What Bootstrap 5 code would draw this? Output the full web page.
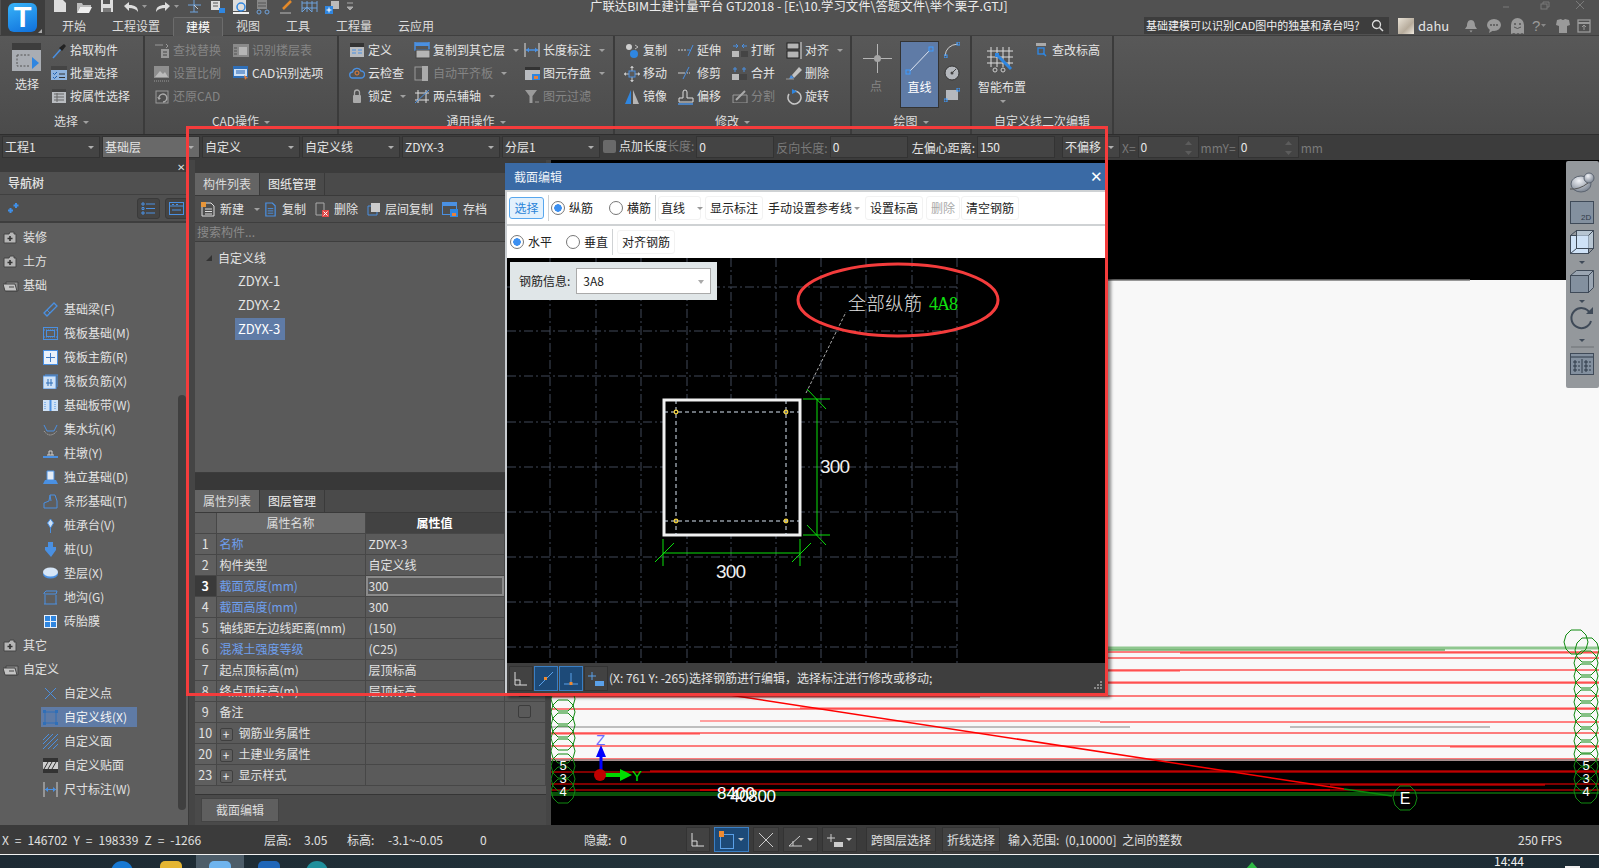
<!DOCTYPE html>
<html lang="zh-CN">
<head>
<meta charset="UTF-8">
<title>广联达BIM土建计量平台 GTJ2018</title>
<link href="https://cdn.jsdelivr.net/npm/bootstrap@5.3.0/dist/css/bootstrap.min.css" rel="stylesheet">
<style>
html,body{height:868px;overflow:hidden}
body{width:1599px;background:#3c3c3c;color:#e4e4e4;font:12px/1.2 "Noto Sans CJK SC","Liberation Sans",sans-serif;position:relative}
svg{display:block;flex:none}
.dim{color:#858585}
/* top band */
.top-band{height:35px;background:#515151;position:relative}
.logo-tile{width:44px;height:35px;margin-left:1px;background:#3d3d3d;padding:3px 7px;position:relative}
.logo-face{width:29px;height:29px;border-radius:6px;background:linear-gradient(160deg,#38b4f8,#0f6fdc);color:#fff;font:bold 29px/29px "Liberation Sans",sans-serif;text-align:center}
.logo-corner{position:absolute;right:3px;bottom:2px;border:solid transparent;border-width:0 0 4px 4px;border-bottom-color:#aaa}
.app-title{position:absolute;left:590px;top:0;font-size:12.4px;line-height:13px;color:#ececec;white-space:nowrap}
.quick-strip{position:absolute;left:50px;top:0}
.tab-strip{position:absolute;left:49px;top:17px;height:19px}
.tab-item{padding:0 13px;line-height:18px;color:#ddd;height:19px}
.tab-item.on{background:#565656;border:1px solid #6c6c6c;border-bottom:0;border-radius:2px 2px 0 0;color:#fff;line-height:18px;padding:0 12px}
.help-zone{position:absolute;left:1144px;top:17px;height:17px}
.help-search{width:245px;height:17px;background:#3d3d3d;padding-left:2px;line-height:17px;font-size:11px;color:#f0f0f0;position:relative}
.help-search svg{position:absolute;right:5px;top:2px}
.avatar-box{width:16px;height:16px;margin-left:9px;background:linear-gradient(135deg,#e8e2d6,#b7ac9c 60%,#efe9df)}
.user-name{margin-left:4px;font-size:13px;width:46px;line-height:17px}
.win-ctl{position:absolute;left:1500px;top:0}
/* ribbon */
.ribbon{height:99px;background:linear-gradient(#585858,#4b4b4b);border-top:1px solid #3f3f3f}
.rb-group{height:98px;border-right:2px solid #3b3b3b;position:relative;display:flex;flex-direction:column}
.rb-g1{width:145px;padding-left:12px}
.rb-g2{width:194px;padding-left:9px}
.rb-g3{width:276px;padding-left:10px}
.rb-g4{width:237px;padding-left:9px}
.rb-g5{width:120px;padding-left:11px}
.rb-g6{width:142px;padding-left:6px}
.rb-body{height:74px;padding-top:3px;display:flex}
.rb-grid{display:grid;grid-auto-rows:23px;align-items:center}
.grid-g1{grid-template-columns:92px}
.grid-g2{grid-template-columns:79px 100px}
.grid-g3{grid-template-columns:65px 110px 90px}
.grid-g4{grid-template-columns:54px 54px 54px 60px}
.rb-item{display:flex;align-items:center;gap:3px;white-space:nowrap}
.rb-item.off{color:#858585}
.rb-big{width:40px}
.rb-big-label{margin:6px 0 0 3px}
.caret{width:0;height:0;border:solid transparent;border-width:3px 3px 0;border-top-color:#a0a0a0;display:inline-block;margin-left:5px;vertical-align:middle}
.rb-label{position:absolute;left:0;right:0;top:77px;text-align:center;color:#dcdcdc;line-height:16px}
.draw-point{width:37px;color:#858585}
.draw-point svg{margin-top:5px}
.draw-point div{margin:6px 0 0 7px}
.draw-line{width:39px;height:67px;margin-top:2px;background:#5f7ba6;border:1px solid #333;color:#fff;text-align:center}
.draw-line svg{margin:3px 0 4px 3px}
.draw-side{margin-left:5px;display:flex;flex-direction:column;gap:7px;padding-top:3px}
.smart-col{width:57px}
.smart-col svg{margin:5px 0 6px 9px}
.smart-col .caret{margin:6px 0 0 22px;display:block}
/* option bar */
.opt-bar{height:26px;background:#3c3c3c;border-top:1px solid #2e2e2e;padding:1px 0 0 2px;gap:2px}
.combo{height:22px;width:98px;background:#444;border:1px solid #333;padding-left:2px;line-height:20px;position:relative;white-space:nowrap}
.combo::after{content:"";position:absolute;right:5px;top:9px;border:solid transparent;border-width:3px 3px 0;border-top-color:#b0b0b0}
.combo.hot{background:#696969}
.combo.wide-off{width:58px;margin-left:5px}
.opt-check{width:13px;height:13px;background:#6a6a6a;border-radius:2px;margin:0 3px 0 1px}
.opt-input{height:22px;width:78px;background:#444;border:1px solid #333;padding-left:2px;line-height:20px;color:#e9e9e9;position:relative}
.opt-input.short{width:61px}
.spin{position:absolute;right:6px;top:4px}
.tx-gap{margin-left:2px}
.dim-tx{color:#7a7a7a;white-space:nowrap}
/* main */
.main-area{height:665px;position:relative}
.nav-pane{width:189px;background:#5e5e5e;border-right:1px solid #3a3a3a;position:relative}
.strip-top{height:12px;background:#3c3c3c;position:relative}
.strip-close{position:absolute;left:177px;top:2px;color:#ddd;font-size:10px;line-height:10px}
.nav-head{height:23px;padding-left:8px;line-height:22px;background:#505050;border-bottom:1px solid #404040;font-weight:500}
.nav-tools{height:28px;background:#505050;border-bottom:2px solid #3e3e3e;position:relative;padding-left:7px;margin-bottom:2px}
.nav-tool-btn{position:absolute;top:3px;width:23px;height:21px;border:1px solid #3a3a3a;border-radius:3px;background:#444;padding:3px}
.tb-a{left:137px}
.tb-b{left:165px}
.tree-row{height:24px;display:flex;align-items:center;white-space:nowrap;color:#e2e2e2}
.tree-root{padding-left:3px;gap:6px}
.tree-root.open{gap:4px}
.tree-kid{padding-left:43px;gap:6px}
.tree-kid.on{background:linear-gradient(#5f7ba6,#5f7ba6) 41px 2px/96px 20px no-repeat;color:#f4f4f4}
.nav-scroll{position:absolute;left:178px;top:235px;width:8px;height:415px;background:#3f3f3f;border-radius:4px}
.mid-pane{width:362px;background:#454545;padding-left:6px}
.mid-inner{width:351px}
.mid-top{height:13px;background:#3c3c3c}
.pane-tabs{height:23px;background:#4a4a4a;border-bottom:1px solid #3a3a3a}
.pane-tab{width:65px;height:22px;line-height:22px;text-align:center;border-right:1px solid #3a3a3a;color:#eee}
.pane-tab.on{background:#646464;color:#ddd}
.list-pane{height:277px;background:#5a5a5a;border-bottom:1px solid #3c3c3c}
.list-tools{height:27px;background:#4f4f4f;border-bottom:1px solid #3e3e3e;padding-left:6px}
.lt-item{display:flex;align-items:center;gap:5px;margin-right:9px}
.lt-item.drop{margin-right:4px}
.list-search{height:19px;padding-left:2px;line-height:18px;color:#8a8a8a;background:#505050;border-bottom:1px solid #3e3e3e}
.list-tree{padding-top:3px}
.lt-row{height:25px;line-height:24px}
.lt-root{padding-left:11px;display:flex;align-items:center;gap:6px}
.lt-kid{margin:0 0 2px 40px;padding:0 3px;width:50px;white-space:nowrap;font-size:13px;height:22px;line-height:22px}
.lt-kid.on{background:#5f7ba6;color:#fff}
.gutter{height:17px;background:#383838}
.prop-table{width:351px;table-layout:fixed;margin:0;--bs-table-bg:#5a5a5a;--bs-table-color:#e2e2e2;--bs-table-border-color:#474747;border-color:#474747;font-size:12px}
.prop-table td,.prop-table th{padding:0 3px;height:21px;line-height:19px;border-width:0 1px 1px 0;white-space:nowrap;overflow:hidden;vertical-align:middle;font-weight:400}
.prop-table th{height:20px}
.prop-table .cn{width:21px;text-align:center;padding:0;background:#5f5f5f;font-size:12.5px}
.prop-table .cname{width:149px}
.prop-table .cval{width:139px}
.prop-table th.h-name{background:#696969;text-align:center;color:#dedede}
.prop-table th.h-val{background:#424242;text-align:center;color:#fff;font-weight:700}
.prop-table th.cn,.prop-table th.h-x{background:#5f5f5f}
.prop-table .lnk{color:#6e9fee}
.prop-table tr.sel .cn{background:#3a3a3a;color:#fff;font-weight:700}
.prop-table tr.sel .cval{box-shadow:inset 0 0 0 2px #8a8a8a}
.plus-box{display:inline-block;width:13px;height:13px;border:1px solid #3f3f3f;border-radius:2px;line-height:10px;text-align:center;margin-right:6px;vertical-align:-1px;background:#5f5f5f;color:#eee;font-size:12px}
.tick-box{display:block;width:13px;height:13px;border:1px solid #3c3c3c;border-radius:2px;margin:0 auto}
.prop-foot{height:9px;background:#5a5a5a;border-bottom:1px solid #353535}
.act-bar{height:31px;background:#4a4a4a;padding:3px 0 0 6px}
.sect-btn{width:78px;height:24px;padding:0;background:#5f5f5f;border:1px solid #444;border-radius:0;color:#ddd;font-size:12px;line-height:22px}
.cad-pane{flex:1;background:#000;position:relative}
.view-tools{position:absolute;right:0;top:1px}
/* dialog */
.sect-dialog{position:absolute;left:505px;top:3px;width:603px;height:533px;background:#fff;box-shadow:3px 2px 3px rgba(0,0,0,.45);border-left:2px solid #c9cdd1;color:#1e1e1e}
.dlg-title{height:27px;margin-left:-2px;background:#3a6aa5;color:#eef3f8;padding-left:9px;line-height:27px}
.dlg-x{position:absolute;right:5px;top:4px;color:#fff;font-size:15px;line-height:18px}
.dlg-row{height:32px;border-top:2px solid #cfd2d4;padding-left:2px;box-sizing:content-box}
.pick-btn{width:35px;height:22px;background:#e3f1fd;border:1px solid #58a7ee;border-radius:3px;color:#2a84d8;padding:0;line-height:20px;font-size:12px}
.vsep{width:1px;height:26px;background:#cfd2d4}
.vs-first{margin:0 2px 0 4px}
.radio-item{display:flex;align-items:center;gap:4px;color:#222}
.radio-item .form-check-input{width:14px;height:14px;margin:0;background-color:#fff;border:1px solid #777;flex:none}
.radio-item .form-check-input:checked{background-color:#fff;border-color:#777;background-image:radial-gradient(circle,#3b8ff0 0 3.5px,transparent 4px)}
.rad-start{margin-left:1px}
.rad-next{margin-left:14px}
.flat-btn{height:24px;padding:0 4px;border:1px solid #f2f2f2;border-radius:3px;line-height:22px;white-space:nowrap;color:#222;position:relative}
.flat-btn.off{color:#aaa}
.flat-drop{width:43px;padding-left:2px;margin-left:2px}
.flat-drop::after,.flat-ref::after{content:"";position:absolute;top:10px;border:solid transparent;border-width:3px 3px 0;border-top-color:#999}
.flat-drop::after{right:-3px}
.flat-ref{width:102px;border-color:transparent}
.flat-ref::after{right:4px}
.gap-3p{margin-left:3px}
.gap-1p{margin-left:1px}
.rebar-info{position:absolute;left:3px;top:4px;width:207px;height:38px;background:#e0e6e8;display:flex;align-items:center;padding-left:9px;color:#222}
.rebar-sel{width:135px;height:26px;margin-left:6px;background:#fff;border:1px solid #aaa;padding-left:6px;line-height:24px;position:relative}
.rebar-sel::after{content:"";position:absolute;right:6px;top:11px;border:solid transparent;border-width:4px 3px 0;border-top-color:#aaa}
.dlg-canvas{height:405px;background:#000;position:relative}
.dlg-status{height:31px;background:#3e3e3e;color:#e2e2e2;padding-left:2px;position:relative;gap:1px;white-space:nowrap}
.st-btn{width:24px;height:25px;border:1px solid #333;background:#424242;display:flex;align-items:center;justify-content:center}
.st-btn.on{background:#1d4a78;border-color:#3a7fc4}
.grip{position:absolute;right:6px;bottom:5px}
.red-mark{position:absolute;left:186px;top:126px;width:922px;height:570px;border:3px solid #f43c3c;pointer-events:none}
/* status */
.status-bar{height:29px;background:#3b3b3b;white-space:nowrap;position:relative;color:#e0e0e0}
.sb-tx{position:absolute;top:0;line-height:29px}
.sx-xyz{left:2px;word-spacing:3.3px}
.sx-a{left:264px}.sx-b{left:304px}.sx-c{left:347px}.sx-d{left:388px}.sx-e{left:480px}.sx-f{left:584px}.sx-g{left:620px}.sx-h{left:1518px}
.sb-tools{position:absolute;left:686px;top:2px;gap:4px}
.sb-btn{height:25px;border:1px solid #333;background:#424242;display:flex;align-items:center;justify-content:center;gap:3px;padding:0 4px;line-height:23px;color:#e0e0e0}
.sb-btn.on{background:#1d4a78;border-color:#3a7fc4}
.sb-first{margin-left:5px}
.sb-second{margin-left:2px}
.sb-range{word-spacing:3px;line-height:25px}
.sb-caret{border:solid transparent;border-width:3px 3px 0;border-top-color:#ccc;width:0;height:0}
.task-bar{height:14px;border-top:1px solid #f2f2f2;background:linear-gradient(90deg,#1d2a33,#24353b 60%,#1c2a33);position:relative;overflow:hidden}
.task-on{position:absolute;left:196px;top:0;width:48px;height:13px;background:#4d5d69}
.task-dot{position:absolute;top:6px;width:22px;height:22px;border-radius:5px}
.dot-a{left:111px;background:#1778d2;border-radius:50%}
.dot-b{left:160px;background:#e4b533}
.dot-c{left:209px;background:#6fb4ee}
.dot-d{left:258px;background:#1f66b8}
.dot-e{left:306px;background:#1f8f9c;border-radius:50%}
.task-clock{position:absolute;left:1494px;top:-1px;line-height:14px;color:#eee;font-size:12px}
.task-mark{position:absolute;left:1246px;top:7px;border:solid transparent;border-width:0 6px 7px;border-bottom-color:#2fb844}
.task-edge{position:absolute;left:1565px;top:11px;width:15px;height:2px;background:#eee}
</style>
</head>
<body>
<svg width="0" height="0" class="position-absolute">
  <symbol id="fold-plus" viewBox="0 0 14 13"><path d="M1 3h5l1-2h4v2h2v9H1z" fill="#b5b5b5" stroke="#444"/><path d="M7 5v5M4.500 7.500h5" stroke="#333" stroke-width="1.600"/></symbol>
  <symbol id="fold-open" viewBox="0 0 16 13"><path d="M3 3h12v9H3z" fill="#8f8f8f" stroke="#444"/><path d="M0 5h12l2 7H2z" fill="#c4c4c4" stroke="#444"/><path d="M6 8h5" stroke="#444"/></symbol>
  <symbol id="tpl-doc" viewBox="0 0 14 16"><path d="M2 1h7l3 3v11H2z" fill="none" stroke="#4a90e2" stroke-width="1.300"/><path d="M4 7h6M4 9.500h6M4 12h6" stroke="#4a90e2"/></symbol>
  <polygon id="hex" points="-5,-12 5,-12 10,-7 12,0 10,7 5,12 -5,12 -10,7 -12,0 -10,-7"/>
  <radialGradient id="ball" cx=".4" cy=".3" r=".8"><stop offset="0" stop-color="#f2f4f8"/><stop offset="1" stop-color="#6c7684"/></radialGradient>
</svg>

<header class="top-band">
  <div class="logo-tile"><div class="logo-face">T</div><span class="logo-corner"></span></div>
  <svg class="quick-strip" width="310" height="15" viewBox="50 0 310 15">
    <path d="M54 0h9l3 3v9H54z" fill="#ddd"/>
    <path d="M77 3h5l1 2h8v2H80l-3 6z" fill="#bbb"/><path d="M80 7h12l-3 6H77z" fill="#eee"/>
    <path d="M101 0h12v12h-12z" fill="#ddd"/><path d="M103 0h7v4h-7z" fill="#555"/><path d="M103 8h8v4h-8z" fill="#777"/>
    <path d="M124 6l5-4v3c6 0 9 2 9 7-2-3-5-4-9-4v3z" fill="#ddd"/><path d="M142 5h5l-2.500 3z" fill="#999"/>
    <path d="M170 6l-5-4v3c-6 0-9 2-9 7 2-3 5-4 9-4v3z" fill="#ddd"/><path d="M174 5h5l-2.500 3z" fill="#999"/>
    <path d="M188 5h13M194 0v12M190 12h8" stroke="#6fa3dd" fill="none"/><path d="M194 5l4 4" stroke="#ccc"/>
    <rect x="211" y="1" width="9" height="9" fill="#ddd"/><rect x="219" y="8" width="6" height="5" fill="#2f86e0"/><path d="M213 3h5M213 6h5" stroke="#555"/>
    <rect x="233" y="0" width="13" height="11" fill="#ddd"/><circle cx="241" cy="7" r="4" fill="none" stroke="#2f86e0" stroke-width="1.500"/><path d="M233 13h16" stroke="#eee" stroke-width="2"/>
    <rect x="257" y="0" width="10" height="9" fill="#888"/><path d="M258 3h8M258 6h8" stroke="#555"/><circle cx="259" cy="12" r="2" fill="none" stroke="#6fa3dd"/><circle cx="267" cy="12" r="2" fill="none" stroke="#6fa3dd"/>
    <path d="M283 9L291 1" stroke="#e48a2a" stroke-width="2.500"/><path d="M280 13h11" stroke="#bbb"/>
    <path d="M302 12V1M307 12V1M312 12V1M317 12V1M302 3h15M302 8h15M302 12l5-5 5 5" stroke="#6fa3dd" fill="none"/>
    <path d="M331 1h8v8h-8z" fill="#bbb"/><rect x="325" y="6" width="8" height="8" fill="#2f86e0"/><path d="M329 7.500v5M326.500 10h5" stroke="#fff"/>
    <path d="M347 3h6M347 7h6l-3 3z" stroke="#aaa" fill="#aaa"/>
  </svg>
  <div class="app-title">广联达BIM土建计量平台 GTJ2018 - [E:\10.学习文件\答题文件\举个栗子.GTJ]</div>
  <nav class="tab-strip d-flex">
    <div class="tab-item">开始</div>
    <div class="tab-item">工程设置</div>
    <div class="tab-item on">建模</div>
    <div class="tab-item">视图</div>
    <div class="tab-item">工具</div>
    <div class="tab-item">工程量</div>
    <div class="tab-item">云应用</div>
  </nav>
  <div class="help-zone d-flex align-items-center">
    <div class="help-search">基础建模可以识别CAD图中的独基和承台吗?<svg width="13" height="13" viewBox="0 0 13 13"><circle cx="5.500" cy="5.500" r="4" fill="none" stroke="#ddd" stroke-width="1.300"/><path d="M8.500 8.500l3.500 3.500" stroke="#ddd" stroke-width="1.500"/></svg></div>
    <div class="avatar-box"></div>
    <div class="user-name">dahu</div>
    <svg width="140" height="17" viewBox="0 0 140 17">
      <path d="M7 3c-3 0-4 3-4 6l-2 3h12l-2-3c0-3-1-6-4-6zM5.500 13.500h3l-1.500 2z" fill="#9a9a9a"/>
      <ellipse cx="30" cy="8" rx="7" ry="6" fill="#9a9a9a"/><path d="M26 12l-1 4 5-3z" fill="#9a9a9a"/><circle cx="27" cy="8" r="1" fill="#555"/><circle cx="30" cy="8" r="1" fill="#555"/><circle cx="33" cy="8" r="1" fill="#555"/>
      <path d="M47 8a6.500 7 0 0 1 13 0v9l-2-1-2 1-2-1-2 1-2-1-3 1z" fill="#9a9a9a"/><circle cx="51" cy="7" r="1" fill="#555"/><circle cx="56" cy="7" r="1" fill="#555"/><path d="M50 10q3.500 3 7 0" stroke="#555" fill="none"/>
      <text x="68" y="14" font-size="15" fill="#9a9a9a" font-family="Liberation Sans">?</text><path d="M77 7h5l-2.500 3z" fill="#888"/>
      <path d="M93 3l4-1q2 2 4 0l4 1 1 5-3 1v7h-8V9l-3-1z" fill="#9a9a9a"/>
      <rect x="114" y="3" width="12" height="12" fill="none" stroke="#9a9a9a" stroke-width="1.300"/><path d="M114 6h12" stroke="#9a9a9a" stroke-width="2"/><path d="M120 13V8M118 10l2-2 2 2" stroke="#9a9a9a" fill="none"/>
    </svg>
  </div>
  <svg class="win-ctl" width="90" height="12" viewBox="1500 0 90 12"><path d="M1503 7h6" stroke="#7a7a7a"/><rect x="1541" y="4" width="6" height="5" fill="none" stroke="#7a7a7a"/><path d="M1543 4V2h6v5h-2" fill="none" stroke="#7a7a7a"/><path d="M1576 1l8 8M1584 1l-8 8" stroke="#7a7a7a"/></svg>
</header>

<section class="ribbon d-flex">
  <div class="rb-group rb-g1">
    <div class="rb-body">
      <div class="rb-big">
        <svg width="29" height="28" viewBox="0 0 29 28" class="mt-1"><rect width="29" height="28" fill="#a9adb3"/><rect width="29" height="7" fill="#3d3d3d"/><path d="M5 12h13M5 12v11h13" stroke="#555" stroke-dasharray="2 1.500" fill="none"/><path d="M20 14l7 6-7 6z" fill="#2f86e0"/></svg>
        <div class="rb-big-label">选择</div>
      </div>
      <div class="rb-grid grid-g1">
        <div class="rb-item"><svg width="16" height="16" viewBox="0 0 16 16"><path d="M2 15l8-9" stroke="#4a90e2" stroke-width="1.500"/><path d="M8 5l3 3 4-5-2-2z" fill="#222"/></svg>拾取构件</div>
        <div class="rb-item"><svg width="16" height="14" viewBox="0 0 16 14"><rect width="16" height="14" fill="#444"/><rect y="4" width="16" height="10" fill="#8fb3de"/><path d="M2 7l1.500 1.500L6 6M2 11l1.500 1.500L6 10" stroke="#1f5fb0" fill="none"/><path d="M8 8h6M8 11.500h6" stroke="#333"/></svg>批量选择</div>
        <div class="rb-item"><svg width="16" height="14" viewBox="0 0 16 14"><rect width="14" height="14" x="1" fill="#b9bcc0"/><rect width="14" height="3" x="1" fill="#444"/><path d="M3 5h10M3 8h10M3 11h10M6 4v9" stroke="#666"/></svg>按属性选择</div>
      </div>
    </div>
    <div class="rb-label">选择<span class="caret"></span></div>
  </div>

  <div class="rb-group rb-g2">
    <div class="rb-body rb-grid grid-g2 d-grid">
      <div class="rb-item off"><svg width="16" height="16" viewBox="0 0 16 16"><path d="M1 2h8M12 1l2 2-2 2" stroke="#999" fill="none"/><rect x="7" y="6" width="8" height="9" fill="#999"/><path d="M9 9h4M9 12h4" stroke="#444"/></svg>查找替换</div>
      <div class="rb-item off"><svg width="16" height="13" viewBox="0 0 16 13"><rect width="16" height="13" fill="#8a8a8a"/><rect x="6" y="3" width="8" height="8" fill="#b5b5b5"/><path d="M1 4h3M1 7h3M1 10h3" stroke="#555"/></svg>识别楼层表</div>
      <div class="rb-item off"><svg width="16" height="16" viewBox="0 0 16 16"><rect width="15" height="12" fill="#8e8e8e"/><path d="M1 11l5-6 3 3 2-2 3 5z" fill="#bbb"/><path d="M0 15h15" stroke="#999" stroke-dasharray="1 1"/></svg>设置比例</div>
      <div class="rb-item"><svg width="16" height="14" viewBox="0 0 16 14"><rect width="15" height="12" fill="#2f6fb8"/><rect x="1" y="3" width="13" height="7" fill="#cfe2f7"/><path d="M3 5h9M3 7h9" stroke="#1f5fb0"/><path d="M11 9l4 3-2 .5-1 1.500z" fill="#e8803a"/></svg>CAD识别选项</div>
      <div class="rb-item off"><svg width="16" height="16" viewBox="0 0 16 16"><rect x="2" y="2" width="12" height="12" fill="none" stroke="#999"/><path d="M5 10a4 4 0 1 1 4 3" fill="none" stroke="#aaa" stroke-width="1.400"/><path d="M3 8l2 3 2-2z" fill="#aaa"/></svg>还原CAD</div>
    </div>
    <div class="rb-label">CAD操作<span class="caret"></span></div>
  </div>

  <div class="rb-group rb-g3">
    <div class="rb-body rb-grid grid-g3 d-grid">
      <div class="rb-item"><svg width="16" height="14" viewBox="0 0 16 14"><rect x="1" width="14" height="14" fill="#b9bcc0"/><rect x="1" width="14" height="4" fill="#333"/><path d="M3 7h4M3 10h4M9 7h4M9 10h4" stroke="#4a90e2"/></svg>定义</div>
      <div class="rb-item"><svg width="16" height="17" viewBox="0 0 16 17"><rect x="1" y="0" width="14" height="8" fill="none" stroke="#4a90e2" stroke-width="1.500"/><rect x="1" y="1" width="14" height="3" fill="#4a90e2"/><rect x="2" y="8" width="14" height="8" fill="#b5b5b5" stroke="#444"/></svg>复制到其它层<span class="caret"></span></div>
      <div class="rb-item"><svg width="16" height="14" viewBox="0 0 16 14"><path d="M1 0v14M15 0v14" stroke="#ddd"/><path d="M2 7h12" stroke="#4a90e2" stroke-width="1.500"/><path d="M2 7l3-2.500v5zM14 7l-3-2.500v5z" fill="#4a90e2"/></svg>长度标注<span class="caret"></span></div>
      <div class="rb-item"><svg width="16" height="14" viewBox="0 0 16 14"><path d="M4 12a3 3 0 0 1-.5-6A4.500 4.500 0 0 1 12 5a3.500 3.500 0 0 1 0 7z" fill="none" stroke="#4a90e2" stroke-width="1.300"/><circle cx="8" cy="7" r="2" fill="none" stroke="#e8803a"/></svg>云检查</div>
      <div class="rb-item off"><svg width="16" height="15" viewBox="0 0 16 15"><rect x="1" y="1" width="8" height="13" fill="none" stroke="#999"/><rect x="8" y="0" width="6" height="15" fill="#aaa"/></svg>自动平齐板<span class="caret"></span></div>
      <div class="rb-item"><svg width="16" height="15" viewBox="0 0 16 15"><rect x="1" y="1" width="15" height="13" fill="#b9bcc0"/><rect x="1" y="1" width="15" height="3" fill="#333"/><rect x="8" y="8" width="8" height="6" fill="#2f86e0"/><rect x="10" y="10" width="4" height="3" fill="#e8803a"/></svg>图元存盘<span class="caret"></span></div>
      <div class="rb-item"><svg width="16" height="14" viewBox="0 0 16 14"><rect x="4" y="6" width="8" height="8" rx="1" fill="#aaa"/><path d="M5.500 6V3.500a2.500 2.500 0 0 1 5 0V6" fill="none" stroke="#aaa" stroke-width="1.300"/></svg>锁定<span class="caret"></span></div>
      <div class="rb-item"><svg width="16" height="15" viewBox="0 0 16 15"><path d="M4 1v13M12 1v13M1 4h14M1 11h14" stroke="#ddd"/><path d="M1 14L15 1" stroke="#4a90e2"/></svg>两点辅轴<span class="caret"></span></div>
      <div class="rb-item off"><svg width="16" height="15" viewBox="0 0 16 15"><path d="M1 1h12L8.500 7v7h-3V7z" fill="#9a9a9a"/><path d="M11 13h4" stroke="#999"/></svg>图元过滤</div>
    </div>
    <div class="rb-label">通用操作<span class="caret"></span></div>
  </div>

  <div class="rb-group rb-g4">
    <div class="rb-body rb-grid grid-g4 d-grid">
      <div class="rb-item"><svg width="16" height="16" viewBox="0 0 16 16"><circle cx="5" cy="4" r="3" fill="#cfcfcf"/><circle cx="10" cy="11" r="4" fill="#2f86e0"/><path d="M11 2l3 2-3 2" stroke="#bbb" fill="none"/></svg>复制</div>
      <div class="rb-item"><svg width="16" height="14" viewBox="0 0 16 14"><path d="M0 7h9" stroke="#ccc" stroke-dasharray="2 1"/><path d="M10 13L15 2" stroke="#4a90e2"/><path d="M9 7h3" stroke="#4a90e2"/></svg>延伸</div>
      <div class="rb-item"><svg width="16" height="16" viewBox="0 0 16 16"><rect y="8" width="7" height="6" fill="#bbb"/><rect x="9" y="8" width="7" height="6" fill="#444"/><path d="M1 3h5M4 1l2 2-2 2M15 3h-5M12 1l-2 2 2 2" stroke="#4a90e2" fill="none"/></svg>打断</div>
      <div class="rb-item"><svg width="16" height="17" viewBox="0 0 16 17"><rect x="1" y="1" width="12" height="6" fill="#b5b5b5" stroke="#222"/><rect x="1" y="9" width="12" height="7" fill="#b5b5b5" stroke="#222"/><path d="M15 0v17" stroke="#ddd"/></svg>对齐<span class="caret"></span></div>
      <div class="rb-item"><svg width="16" height="16" viewBox="0 0 16 16"><path d="M8 0v16M0 8h16" stroke="#ccc"/><rect x="5" y="5" width="6" height="6" fill="#5a5a5a" stroke="#4a90e2"/><path d="M8 0l-2 2h4zM8 16l-2-2h4zM0 8l2-2v4zM16 8l-2-2v4z" fill="#ccc"/></svg>移动</div>
      <div class="rb-item"><svg width="16" height="14" viewBox="0 0 16 14"><path d="M0 7h7" stroke="#ccc"/><path d="M9 7h3" stroke="#ccc" stroke-dasharray="1 1"/><path d="M5 13L11 1" stroke="#4a90e2"/></svg>修剪</div>
      <div class="rb-item"><svg width="16" height="16" viewBox="0 0 16 16"><rect y="8" width="15" height="6" fill="#444"/><rect y="8" width="7" height="6" fill="#bbb"/><path d="M3 1v5M1 3h4M12 1v5M10 3h4" stroke="#4a90e2"/></svg>合并</div>
      <div class="rb-item"><svg width="16" height="14" viewBox="0 0 16 14"><path d="M6 9l7-8 3 3-8 8z" fill="#c2c2c2"/><path d="M5 9l3 3-2 1H3z" fill="#4a90e2"/><path d="M0 13h8" stroke="#999"/></svg>删除</div>
      <div class="rb-item"><svg width="16" height="16" viewBox="0 0 16 16"><path d="M7 1v14H1z" fill="#2f86e0"/><path d="M9 1v14h6z" fill="#b5b5b5"/></svg>镜像</div>
      <div class="rb-item"><svg width="16" height="16" viewBox="0 0 16 16"><path d="M1 13V9h4V3a2 2 0 0 1 4 0v6h6v4z" fill="none" stroke="#ddd"/><path d="M0 15h15" stroke="#4a90e2" stroke-width="1.500"/></svg>偏移</div>
      <div class="rb-item off"><svg width="16" height="14" viewBox="0 0 16 14"><path d="M1 6h14v8H1z" fill="none" stroke="#999"/><path d="M4 11l9-9" stroke="#aaa" stroke-width="2"/></svg>分割</div>
      <div class="rb-item"><svg width="16" height="16" viewBox="0 0 16 16"><path d="M9 2a6.500 6.500 0 1 1-6 3" fill="none" stroke="#c7c7c7" stroke-width="1.500"/><path d="M6 0l5 2.500L6 5z" fill="#2f86e0"/></svg>旋转</div>
    </div>
    <div class="rb-label">修改<span class="caret"></span></div>
  </div>

  <div class="rb-group rb-g5">
    <div class="rb-body">
      <div class="draw-point">
        <svg width="29" height="29" viewBox="0 0 29 29"><path d="M14.500 0v29M0 14.500h29" stroke="#b5b5b5"/><circle cx="14.500" cy="14.500" r="3.500" fill="#a5a5a5"/></svg>
        <div>点</div>
      </div>
      <div class="draw-line">
        <svg width="30" height="31" viewBox="0 0 30 31"><path d="M5 27L27 4" stroke="#dfe7f2"/><rect x="2" y="25" width="4" height="4" fill="#5f7ba6" stroke="#3f9bff"/><rect x="25" y="2" width="4" height="4" fill="#5f7ba6" stroke="#3f9bff"/></svg>
        直线
      </div>
      <div class="draw-side">
        <svg width="16" height="16" viewBox="0 0 16 16"><path d="M1 14Q2 3 14 2" fill="none" stroke="#ccc"/><rect x="0" y="13" width="3" height="3" fill="none" stroke="#3f9bff"/><rect x="13" y="0" width="3" height="3" fill="none" stroke="#3f9bff"/></svg>
        <svg width="16" height="16" viewBox="0 0 16 16"><circle cx="8" cy="8" r="7" fill="#b5b8bd" stroke="#333"/><circle cx="8" cy="8" r="1.500" fill="#444"/><path d="M8 8l4-4" stroke="#444"/></svg>
        <svg width="16" height="14" viewBox="0 0 16 14"><rect x="2" y="2" width="12" height="10" fill="#b5b8bd"/><rect x="0" y="11" width="3" height="3" fill="none" stroke="#3f9bff"/><rect x="13" y="0" width="3" height="3" fill="none" stroke="#3f9bff"/></svg>
      </div>
    </div>
    <div class="rb-label">绘图<span class="caret"></span></div>
  </div>

  <div class="rb-group rb-g6">
    <div class="rb-body">
      <div class="smart-col">
        <svg width="30" height="30" viewBox="0 0 30 30"><path d="M4 3v20M10 3v20M16 3v20M22 3v20M0 7h26M0 13h26M0 19h26" stroke="#ddd"/><path d="M10 11l14 14" stroke="#2f86e0" stroke-width="3"/><rect x="8" y="9" width="4" height="4" fill="#2f86e0"/><circle cx="8" cy="26" r="2" fill="none" stroke="#ccc"/><circle cx="16" cy="26" r="2" fill="none" stroke="#ccc"/></svg>
        <div>智能布置</div>
        <span class="caret"></span>
      </div>
      <div class="rb-item align-self-start mt-1"><svg width="14" height="14" viewBox="0 0 14 14"><path d="M1 0h10v3H1z" fill="#aaa"/><rect x="3" y="5" width="6" height="6" fill="none" stroke="#2f86e0" stroke-width="1.400"/><path d="M8 10l3 3" stroke="#2f86e0" stroke-width="1.400"/></svg>查改标高</div>
    </div>
    <div class="rb-label">自定义线二次编辑</div>
  </div>
  <div class="flex-fill"></div>
</section>

<section class="opt-bar d-flex align-items-start">
  <div class="combo">工程1</div>
  <div class="combo hot">基础层</div>
  <div class="combo">自定义</div>
  <div class="combo">自定义线</div>
  <div class="combo">ZDYX-3</div>
  <div class="combo">分层1</div>
  <div class="d-flex align-items-center align-self-stretch mb-1">
    <span class="opt-check"></span><span>点加长度</span><span class="dim-tx">长度:</span>
  </div>
  <div class="opt-input">0</div>
  <div class="dim-tx lh-lg">反向长度:</div>
  <div class="opt-input">0</div>
  <div class="lh-lg tx-gap">左偏心距离:</div>
  <div class="opt-input">150</div>
  <div class="combo wide-off">不偏移</div>
  <div class="dim-tx lh-lg">X=</div>
  <div class="opt-input short">0<svg class="spin" width="7" height="14" viewBox="0 0 7 14"><path d="M0 4l3.500-4L7 4zM0 10l3.500 4L7 10z" fill="#5c5c5c"/></svg></div>
  <div class="dim-tx lh-lg">mmY=</div>
  <div class="opt-input short">0<svg class="spin" width="7" height="14" viewBox="0 0 7 14"><path d="M0 4l3.500-4L7 4zM0 10l3.500 4L7 10z" fill="#5c5c5c"/></svg></div>
  <div class="dim-tx lh-lg">mm</div>
</section>

<main class="main-area d-flex">
  <aside class="nav-pane">
    <div class="strip-top"><span class="strip-close">✕</span></div>
    <div class="nav-head">导航树</div>
    <div class="nav-tools d-flex align-items-center">
      <svg width="13" height="10" viewBox="0 0 13 10"><path d="M3.500 5v5M1 7.500h5M9 0v5M6.500 2.500h5" stroke="#3f8fe8" stroke-width="2"/></svg>
      <div class="nav-tool-btn tb-a"><svg width="15" height="13" viewBox="0 0 15 13"><path d="M1 1h2v2H1zM1 5.500h2v2H1zM1 10h2v2H1zM5 2h9M5 6.500h9M5 11h9" stroke="#4a90e2" fill="none"/></svg></div>
      <div class="nav-tool-btn tb-b"><svg width="15" height="13" viewBox="0 0 15 13"><rect x=".5" y=".5" width="14" height="12" fill="none" stroke="#4a90e2"/><path d="M1 4h13M3 2.500h2M7 2.500h2M3 8h9" stroke="#4a90e2"/></svg></div>
    </div>
    <div class="tree-row tree-root"><svg width="14" height="13"><use href="#fold-plus"/></svg>装修</div>
    <div class="tree-row tree-root"><svg width="14" height="13"><use href="#fold-plus"/></svg>土方</div>
    <div class="tree-row tree-root open"><svg width="16" height="13"><use href="#fold-open"/></svg>基础</div>
    <div class="tree-kid tree-row"><svg width="15" height="15" viewBox="0 0 15 15"><path d="M1 11L11 1l3 3L4 14z" fill="none" stroke="#4a90e2" stroke-width="1.300"/><path d="M4 8l3 3" stroke="#4a90e2"/></svg>基础梁(F)</div>
    <div class="tree-kid tree-row"><svg width="15" height="13" viewBox="0 0 15 13"><rect x=".5" y=".5" width="14" height="12" fill="none" stroke="#4a90e2"/><rect x="3.500" y="3.500" width="8" height="6" fill="none" stroke="#4a90e2"/><path d="M1 3h13M1 10h13" stroke="#4a90e2" stroke-dasharray="1 1"/></svg>筏板基础(M)</div>
    <div class="tree-kid tree-row"><svg width="15" height="15" viewBox="0 0 15 15"><rect width="15" height="15" fill="#e9f1fb"/><rect x=".5" y=".5" width="14" height="14" fill="none" stroke="#4a90e2"/><path d="M3 7.500h9M7.500 3v9" stroke="#3f7cc8"/></svg>筏板主筋(R)</div>
    <div class="tree-kid tree-row"><svg width="15" height="15" viewBox="0 0 15 15"><rect y="2" width="13" height="13" fill="#cfe2f7" stroke="#4a90e2"/><path d="M3 9h7M5 5v7M8 5v7" stroke="#2f6fb8"/><path d="M2 1h13v12" fill="none" stroke="#4a90e2"/></svg>筏板负筋(X)</div>
    <div class="tree-kid tree-row"><svg width="15" height="11" viewBox="0 0 15 11"><rect width="15" height="11" fill="#cfe2f7"/><path d="M7.500 0v11" stroke="#4a90e2" stroke-width="2"/><path d="M2 2v8M12 2v8" stroke="#4a90e2" stroke-dasharray="1 1"/></svg>基础板带(W)</div>
    <div class="tree-kid tree-row"><svg width="15" height="13" viewBox="0 0 15 13"><path d="M1 2l3 6h7l3-6" fill="none" stroke="#4a90e2"/><path d="M1 8q6 8 13 0" fill="none" stroke="#bbb" stroke-dasharray="1 1"/></svg>集水坑(K)</div>
    <div class="tree-kid tree-row"><svg width="15" height="9" viewBox="0 0 15 9"><path d="M0 8h15" stroke="#4a90e2" stroke-width="2"/><path d="M4 6h7M6 6V2h3v4" stroke="#cfcfcf" fill="none"/></svg>柱墩(Y)</div>
    <div class="tree-kid tree-row"><svg width="15" height="15" viewBox="0 0 15 15"><path d="M4 1h7v9H4z" fill="#e4ecf6" stroke="#4a90e2"/><path d="M0 14l2-4h11l2 4z" fill="#4a90e2"/></svg>独立基础(D)</div>
    <div class="tree-kid tree-row"><svg width="15" height="15" viewBox="0 0 15 15"><path d="M1 14V9l5-2 1-6h5l2 6v7z" fill="none" stroke="#4a90e2"/><path d="M7 1l1 6" stroke="#4a90e2"/></svg>条形基础(T)</div>
    <div class="tree-kid tree-row"><svg width="15" height="15" viewBox="0 0 15 15"><path d="M7.500 1l3 4-3 5-3-5z" fill="#cfe2f7" stroke="#4a90e2"/><path d="M7.500 10v5" stroke="#4a90e2"/></svg>桩承台(V)</div>
    <div class="tree-kid tree-row"><svg width="15" height="15" viewBox="0 0 15 15"><path d="M5 0h5v5h3v3l-5 7-6-7V5h3z" fill="#4a90e2"/></svg>桩(U)</div>
    <div class="tree-kid tree-row"><svg width="15" height="12" viewBox="0 0 15 12"><ellipse cx="7.500" cy="7" rx="7.500" ry="4.500" fill="#4a90e2"/><ellipse cx="7.500" cy="5" rx="7.500" ry="4.500" fill="#d6e6f8"/></svg>垫层(X)</div>
    <div class="tree-kid tree-row"><svg width="15" height="15" viewBox="0 0 15 15"><path d="M1 14h13M2 14V5M13 14V5M1 3l2-2h11l-1 3H1z" fill="none" stroke="#4a90e2"/></svg>地沟(G)</div>
    <div class="tree-kid tree-row"><svg width="15" height="15" viewBox="0 0 15 15"><rect x="1" y="1" width="13" height="13" fill="#e9f1fb"/><rect x="2" y="2" width="5" height="5" fill="#2f86e0"/><rect x="8" y="2" width="5" height="5" fill="#2f86e0"/><rect x="2" y="8" width="5" height="5" fill="#2f86e0"/><rect x="8" y="8" width="5" height="5" fill="#2f86e0"/></svg>砖胎膜</div>
    <div class="tree-row tree-root"><svg width="14" height="13"><use href="#fold-plus"/></svg>其它</div>
    <div class="tree-row tree-root open"><svg width="16" height="13"><use href="#fold-open"/></svg>自定义</div>
    <div class="tree-kid tree-row"><svg width="15" height="13" viewBox="0 0 15 13"><path d="M2 1l11 11M13 1L2 12" stroke="#4a90e2"/></svg>自定义点</div>
    <div class="tree-kid tree-row on"><svg width="15" height="15" viewBox="0 0 15 15"><rect x="2" y="2" width="11" height="11" fill="none" stroke="#2f6fb8"/><path d="M0 0h3v3H0zM12 0h3v3h-3zM0 12h3v3H0zM12 12h3v3h-3z" fill="#2f6fb8"/></svg>自定义线(X)</div>
    <div class="tree-kid tree-row"><svg width="15" height="15" viewBox="0 0 15 15"><path d="M0 6l6-6M0 10L10 0M0 15L15 0M5 15L15 5M10 15l5-5" stroke="#4a90e2"/></svg>自定义面</div>
    <div class="tree-kid tree-row"><svg width="15" height="15" viewBox="0 0 15 15"><rect width="15" height="15" fill="#333"/><rect y="4" width="15" height="7" fill="#cfcfcf"/><path d="M1 11l4-7M5 11l4-7M9 11l4-7" stroke="#333"/></svg>自定义贴面</div>
    <div class="tree-kid tree-row"><svg width="15" height="15" viewBox="0 0 15 15"><path d="M1 0v15M14 0v15" stroke="#ccc"/><path d="M2 7.500h11" stroke="#4a90e2"/><path d="M2 7.500l3-2.500v5zM13 7.500l-3-2.500v5z" fill="#4a90e2"/></svg>尺寸标注(W)</div>
    <div class="nav-scroll"></div>
  </aside>

  <div class="mid-pane">
    <div class="mid-inner">
      <div class="mid-top"></div>
      <div class="pane-tabs d-flex"><div class="pane-tab on">构件列表</div><div class="pane-tab">图纸管理</div></div>
      <div class="list-pane">
        <div class="list-tools d-flex align-items-center">
          <div class="lt-item drop"><svg width="14" height="15" viewBox="0 0 14 15"><path d="M1 1h9l3 3v10H1z" fill="none" stroke="#ddd"/><path d="M4 7h7M4 9.500h7M4 12h7" stroke="#ddd"/><rect width="5" height="5" fill="#e8963a"/></svg>新建<span class="caret"></span></div>
          <div class="lt-item"><svg width="13" height="15"><use href="#tpl-doc"/></svg>复制</div>
          <div class="lt-item"><svg width="14" height="15" viewBox="0 0 14 15"><path d="M1 1h8v12H1z" fill="none" stroke="#aaa"/><rect x="7" y="8" width="7" height="7" fill="#e04848"/><path d="M8.500 9.500l4 4M12.500 9.500l-4 4" stroke="#fff"/></svg>删除</div>
          <div class="lt-item"><svg width="13" height="14" viewBox="0 0 13 14"><rect x="4" y="1" width="9" height="9" fill="#ccc"/><path d="M4 4H1v9h9v-3" fill="none" stroke="#4a90e2"/></svg>层间复制</div>
          <div class="lt-item"><svg width="16" height="15" viewBox="0 0 16 15"><rect x=".5" y=".5" width="14" height="12" fill="none" stroke="#4a90e2"/><rect x="1" y="1" width="14" height="3" fill="#4a90e2"/><rect x="8" y="7" width="8" height="8" fill="#2f86e0"/><rect x="10" y="11" width="4" height="3" fill="#e8803a"/></svg>存档</div>
        </div>
        <div class="list-search">搜索构件...</div>
        <div class="list-tree">
          <div class="lt-root lt-row"><svg width="6" height="6" viewBox="0 0 6 6"><path d="M6 0v6H0z" fill="#333"/></svg>自定义线</div>
          <div class="lt-kid">ZDYX-1</div>
          <div class="lt-kid">ZDYX-2</div>
          <div class="lt-kid on">ZDYX-3</div>
        </div>
      </div>
      <div class="gutter"></div>
      <div class="pane-tabs d-flex"><div class="pane-tab on">属性列表</div><div class="pane-tab">图层管理</div></div>
      <table class="table prop-table">
        <thead><tr><th class="cn"></th><th class="cname h-name">属性名称</th><th class="cval h-val">属性值</th><th class="h-x"></th></tr></thead>
        <tbody>
          <tr><td class="cn">1</td><td class="lnk">名称</td><td>ZDYX-3</td><td></td></tr>
          <tr><td class="cn">2</td><td>构件类型</td><td>自定义线</td><td></td></tr>
          <tr class="sel"><td class="cn">3</td><td class="lnk">截面宽度(mm)</td><td class="cval">300</td><td></td></tr>
          <tr><td class="cn">4</td><td class="lnk">截面高度(mm)</td><td>300</td><td></td></tr>
          <tr><td class="cn">5</td><td>轴线距左边线距离(mm)</td><td>(150)</td><td></td></tr>
          <tr><td class="cn">6</td><td class="lnk">混凝土强度等级</td><td>(C25)</td><td></td></tr>
          <tr><td class="cn">7</td><td>起点顶标高(m)</td><td>层顶标高</td><td></td></tr>
          <tr><td class="cn">8</td><td>终点顶标高(m)</td><td>层顶标高</td><td><span class="tick-box"></span></td></tr>
          <tr><td class="cn">9</td><td>备注</td><td></td><td><span class="tick-box"></span></td></tr>
          <tr><td class="cn">10</td><td><span class="plus-box">+</span>钢筋业务属性</td><td></td><td></td></tr>
          <tr><td class="cn">20</td><td><span class="plus-box">+</span>土建业务属性</td><td></td><td></td></tr>
          <tr><td class="cn">23</td><td><span class="plus-box">+</span>显示样式</td><td></td><td></td></tr>
        </tbody>
      </table>
      <div class="prop-foot"></div>
      <div class="act-bar"><button class="btn sect-btn" type="button">截面编辑</button></div>
    </div>
  </div>

  <div class="cad-pane">
    <svg width="1048" height="665" viewBox="551 160 1048 665">
      <rect x="551" y="280" width="1048" height="480" fill="#f8f8f8"/>
      <path d="M551 280H1470" stroke="#777" stroke-width="1.500"/>
      <path d="M551 648H1599" stroke="#8fc78f" stroke-width="3"/>
      <path d="M551 650H1445" stroke="#2c8f2c"/>
      <path d="M1180 653H1599M551 671H1180M1000 682H1599M551 697H980M800 708H1599M700 721H1100M551 734H700M1450 747H1599M551 760H1599" stroke="#ffa0a0" stroke-width="2"/>
      <path d="M551 652H1599M551 658H1599M551 670H1599M551 683H1599M551 696H1599M551 709H1599M551 733H1599M551 746H1599M551 759H1599" stroke="#f00" stroke-width="1.200"/>
      <path d="M1100 722H1599" stroke="#ff8080" stroke-width="2"/>
      <path d="M551 727H1130M1290 727H1490" stroke="#aaa" stroke-width="1.500"/>
      <path d="M551 760H1599" stroke="#8a8a8a" stroke-width="1.500"/>
      <path d="M650 771H1599M700 790H1330M1330 785H1545" stroke="#800000" stroke-width="2"/>
      <path d="M551 772H1599M551 784H1599M551 790H1599" stroke="#f00" stroke-width="1.200"/>
      <path d="M551 793H1599M551 795H1400" stroke="#0c6e0c" stroke-width="1.500"/>
      <path d="M500 660L1344 789" stroke="#f00" stroke-width="1.500"/>
      <path d="M1344 789L1392 796" stroke="#0c8a0c" stroke-width="1.500"/>
      <g fill="none" stroke="#118a11">
        <use href="#hex" x="563" y="699"/><use href="#hex" x="563" y="712"/><use href="#hex" x="563" y="725"/><use href="#hex" x="563" y="738"/><use href="#hex" x="563" y="751"/>
        <use href="#hex" x="563" y="766"/><use href="#hex" x="563" y="779"/><use href="#hex" x="563" y="791"/>
        <use href="#hex" x="1576" y="642"/><use href="#hex" x="1587" y="650"/><use href="#hex" x="1586" y="663"/><use href="#hex" x="1586" y="676"/><use href="#hex" x="1586" y="689"/><use href="#hex" x="1586" y="702"/><use href="#hex" x="1586" y="715"/><use href="#hex" x="1586" y="728"/><use href="#hex" x="1586" y="741"/><use href="#hex" x="1586" y="754"/>
        <use href="#hex" x="1586" y="766"/><use href="#hex" x="1586" y="779"/><use href="#hex" x="1586" y="791"/><use href="#hex" x="1405" y="798"/>
      </g>
      <g fill="#fff" font-family="Liberation Sans Narrow,Liberation Sans,sans-serif" font-size="13" text-anchor="middle">
        <text x="563" y="770">5</text><text x="563" y="783">3</text><text x="563" y="796">4</text>
        <text x="1586" y="770">5</text><text x="1586" y="783">3</text><text x="1586" y="796">4</text>
        <text x="1405" y="804" font-size="16">E</text>
      </g>
      <text x="717" y="799" fill="#fff" font-size="17" font-family="Liberation Sans Narrow,Liberation Sans,sans-serif" textLength="38">8400</text>
      <text x="730" y="802" fill="#fff" font-size="17" font-family="Liberation Sans Narrow,Liberation Sans,sans-serif" textLength="46">40800</text>
      <path d="M601 772V757" stroke="#0000ff" stroke-width="3"/><path d="M596 757l5-12 5 12z" fill="#0000ff"/>
      <path d="M604 775H622" stroke="#00d400" stroke-width="4"/><path d="M620 769l12 6-12 6z" fill="#00e000"/>
      <ellipse cx="600" cy="775" rx="6" ry="6" fill="#c00000"/>
      <text x="596" y="745" fill="#6a6aff" font-size="15" font-family="Liberation Sans Narrow,Liberation Sans,sans-serif">Z</text>
      <text x="632" y="781" fill="#00e000" font-size="15" font-family="Liberation Sans">Y</text>
    </svg>
    <svg class="view-tools" width="33" height="227" viewBox="0 0 33 227">
      <rect width="33" height="227" rx="2" fill="#94989c"/>
      <ellipse cx="15" cy="23" rx="10" ry="8" fill="url(#ball)" stroke="#5c6470"/><circle cx="23" cy="17" r="5" fill="url(#ball)" stroke="#5c6470"/><path d="M4 28q9 1 18-6" stroke="#555" fill="none"/>
      <rect x="4.500" y="40.500" width="23" height="22" fill="#83909f" stroke="#3f4a58"/><text x="15" y="59" font-size="8" fill="#2f3a48" font-family="Liberation Sans">2D</text>
      <rect x="4.500" y="74.500" width="18" height="18" fill="#cfe2f7" stroke="#3f4a58"/><rect x="10.500" y="69.500" width="17" height="18" fill="#cfe2f7" fill-opacity=".6" stroke="#3f4a58"/><path d="M4.500 74.500l6-5M22.500 74.500l5-5M4.500 92.500l6-5M22.500 92.500l5-5" stroke="#3f4a58"/>
      <path d="M13 100h6l-3 3z" fill="#3f4a58"/>
      <path d="M4.500 114.500l6-5h17v17l-5 5z" fill="#9aa5b2" stroke="#3f4a58"/><rect x="4.500" y="114.500" width="18" height="17" fill="#83909f" stroke="#3f4a58"/><path d="M22.500 114.500l5-5" stroke="#3f4a58"/>
      <path d="M13 139h6l-3 3z" fill="#3f4a58"/>
      <path d="M24 152a10 10 0 1 0 1 8" fill="none" stroke="#3f4a58" stroke-width="2"/><path d="M20 153h7v-7z" fill="#3f4a58"/>
      <path d="M13 178h6l-3 3z" fill="#3f4a58"/><path d="M5 186h23" stroke="#6c7075"/>
      <rect x="4.500" y="192.500" width="23" height="21" fill="#83909f" stroke="#3f4a58"/><path d="M5 196h22M16 198v14M8 200h2v2H8zM8 204h2v2H8zM8 208h2v2H8zM19 200h2v2h-2zM19 204h2v2h-2zM19 208h2v2h-2zM12 201h2M12 205h2M12 209h2M23 201h2M23 205h2M23 209h2" stroke="#2f3a48" fill="none"/>
    </svg>
  </div>

  <div class="sect-dialog">
    <div class="dlg-title">截面编辑</div>
    <span class="dlg-x">✕</span>
    <div class="dlg-row d-flex align-items-center">
      <button class="btn pick-btn" type="button">选择</button>
      <span class="vsep vs-first"></span>
      <label class="radio-item"><input class="form-check-input" type="radio" name="rebar" checked>纵筋</label>
      <label class="radio-item ms-3"><input class="form-check-input" type="radio" name="rebar">横筋</label>
      <span class="vsep ms-1"></span>
      <div class="flat-btn flat-drop">直线</div>
      <div class="flat-btn ms-1">显示标注</div>
      <div class="flat-btn flat-ref">手动设置参考线</div>
      <div class="flat-btn">设置标高</div>
      <div class="flat-btn off gap-3p">删除</div>
      <div class="flat-btn gap-1p">清空钢筋</div>
    </div>
    <div class="dlg-row d-flex align-items-center">
      <label class="radio-item rad-start"><input class="form-check-input" type="radio" name="dir" checked>水平</label>
      <label class="radio-item rad-next"><input class="form-check-input" type="radio" name="dir">垂直</label>
      <span class="vsep ms-1"></span>
      <div class="flat-btn ms-1">对齐钢筋</div>
    </div>
    <div class="dlg-canvas">
      <svg width="601" height="405" viewBox="507 258 601 405">
        <path d="M550 258V663M596 258V663M641 258V663M687 258V663M731 258V663M776 258V663M821 258V663M866 258V663M912 258V663M957 258V663M507 287H957M507 331H957M507 376H957M507 422H957M507 467H957M507 512H957M507 557H957M507 602H957M507 647H957" stroke="#404858" stroke-dasharray="9 3 2 3"/>
        <path d="M806 393L846 312" stroke="#aaa" stroke-dasharray="3 2"/>
        <rect x="664" y="400" width="136" height="135" fill="#000" stroke="#f0f0f0" stroke-width="3"/>
        <path d="M676 400V535M786 400V535M664 412H800M664 521H800" stroke="#d8e4f2" stroke-dasharray="4 3"/>
        <g fill="none" stroke="#f4d23c" stroke-width="1.300"><circle cx="676" cy="412" r="1.800"/><circle cx="786" cy="412" r="1.800"/><circle cx="676" cy="521" r="1.800"/><circle cx="786" cy="521" r="1.800"/></g>
        <path d="M817 399V535M803 399H830M803 535H830M807 389L826 409M807 525L826 545M663 553H800M663 539V566M800 539V566M655 562L674 543M792 562L811 543" stroke="#0be00b" fill="none"/>
        <text x="820" y="473" fill="#f0f0f0" font-size="19" font-family="Liberation Sans Narrow,Liberation Sans,sans-serif" textLength="30">300</text>
        <text x="716" y="578" fill="#f0f0f0" font-size="19" font-family="Liberation Sans Narrow,Liberation Sans,sans-serif" textLength="30">300</text>
        <text x="848" y="310" fill="#e4e4e4" font-size="18" font-weight="300" font-family="Noto Sans CJK SC,sans-serif" textLength="74">全部纵筋</text>
        <text x="929" y="310" fill="#10e010" font-size="18" font-family="Liberation Serif,serif" textLength="29">4A8</text>
        <ellipse cx="898" cy="300" rx="100" ry="36" fill="none" stroke="#f43c3c" stroke-width="3"/>
      </svg>
      <div class="rebar-info">钢筋信息:<div class="rebar-sel">3A8</div></div>
    </div>
    <div class="dlg-status d-flex align-items-center">
      <span class="st-btn"><svg width="14" height="14" viewBox="0 0 14 14"><path d="M1 0v13h12M1 8h5v5" stroke="#ddd" fill="none"/></svg></span>
      <span class="st-btn on"><svg width="16" height="16" viewBox="0 0 16 16"><path d="M1 15L15 1" stroke="#5aa0e8"/><rect x="6" y="6" width="3" height="3" fill="#f08a30"/></svg></span>
      <span class="st-btn on"><svg width="16" height="16" viewBox="0 0 16 16"><path d="M8 2v11M1 13h14" stroke="#5aa0e8"/><rect x="6.500" y="11" width="3" height="3" fill="#f08a30"/></svg></span>
      <span class="st-btn"><svg width="16" height="16" viewBox="0 0 16 16"><path d="M4 1v8M0 5h8" stroke="#5aa0e8"/><rect x="7" y="10" width="9" height="5" fill="#5aa0e8"/></svg></span>
      <span>(X: 761 Y: -265)选择钢筋进行编辑，选择标注进行修改或移动;</span>
      <svg class="grip" width="8" height="8" viewBox="0 0 8 8"><path d="M6 0h2v2H6zM3 3h2v2H3zM6 3h2v2H6zM0 6h2v2H0zM3 6h2v2H3zM6 6h2v2H6z" fill="#888"/></svg>
    </div>
  </div>
</main>

<footer class="status-bar">
  <span class="sb-tx sx-xyz">X = 146702 Y = 198339 Z = -1266</span>
  <span class="sb-tx sx-a">层高:</span><span class="sb-tx sx-b">3.05</span>
  <span class="sb-tx sx-c">标高:</span><span class="sb-tx sx-d">-3.1~-0.05</span>
  <span class="sb-tx sx-e">0</span><span class="sb-tx sx-f">隐藏:</span><span class="sb-tx sx-g">0</span>
  <div class="sb-tools d-flex">
    <span class="sb-btn"><svg width="14" height="14" viewBox="0 0 14 14"><path d="M1 0v13h12M1 8h5v5" stroke="#ddd" fill="none"/></svg></span>
    <span class="sb-btn on"><svg width="16" height="18" viewBox="0 0 16 18"><rect x="1.500" y="3.500" width="13" height="14" fill="none" stroke="#5aa0e8"/><rect y="0" width="5" height="6" fill="#f08a30"/></svg><span class="sb-caret"></span></span>
    <span class="sb-btn"><svg width="16" height="16" viewBox="0 0 16 16"><path d="M1 1l14 14M15 1L1 15" stroke="#ccc"/></svg></span>
    <span class="sb-btn"><svg width="16" height="16" viewBox="0 0 16 16"><path d="M1 14h13M1 14l11-10" stroke="#ccc"/><path d="M5 9v5" stroke="#ccc"/></svg><span class="sb-caret"></span></span>
    <span class="sb-btn"><svg width="16" height="16" viewBox="0 0 16 16"><path d="M4 2v8M0 6h8" stroke="#ccc"/><rect x="7" y="10" width="9" height="5" fill="#ccc"/></svg><span class="sb-caret"></span></span>
    <span class="sb-btn sb-first">跨图层选择</span>
    <span class="sb-btn sb-second">折线选择</span>
    <span class="ms-1 sb-range">输入范围: (0,10000] 之间的整数</span>
  </div>
  <span class="sb-tx sx-h">250 FPS</span>
</footer>
<div class="task-bar">
  <span class="task-on"></span>
  <span class="task-dot dot-a"></span><span class="task-dot dot-b"></span><span class="task-dot dot-c"></span><span class="task-dot dot-d"></span><span class="task-dot dot-e"></span>
  <span class="task-mark"></span>
  <span class="task-clock">14:44</span>
  <span class="task-edge"></span>
</div>

<div class="red-mark"></div>
</body>
</html>
